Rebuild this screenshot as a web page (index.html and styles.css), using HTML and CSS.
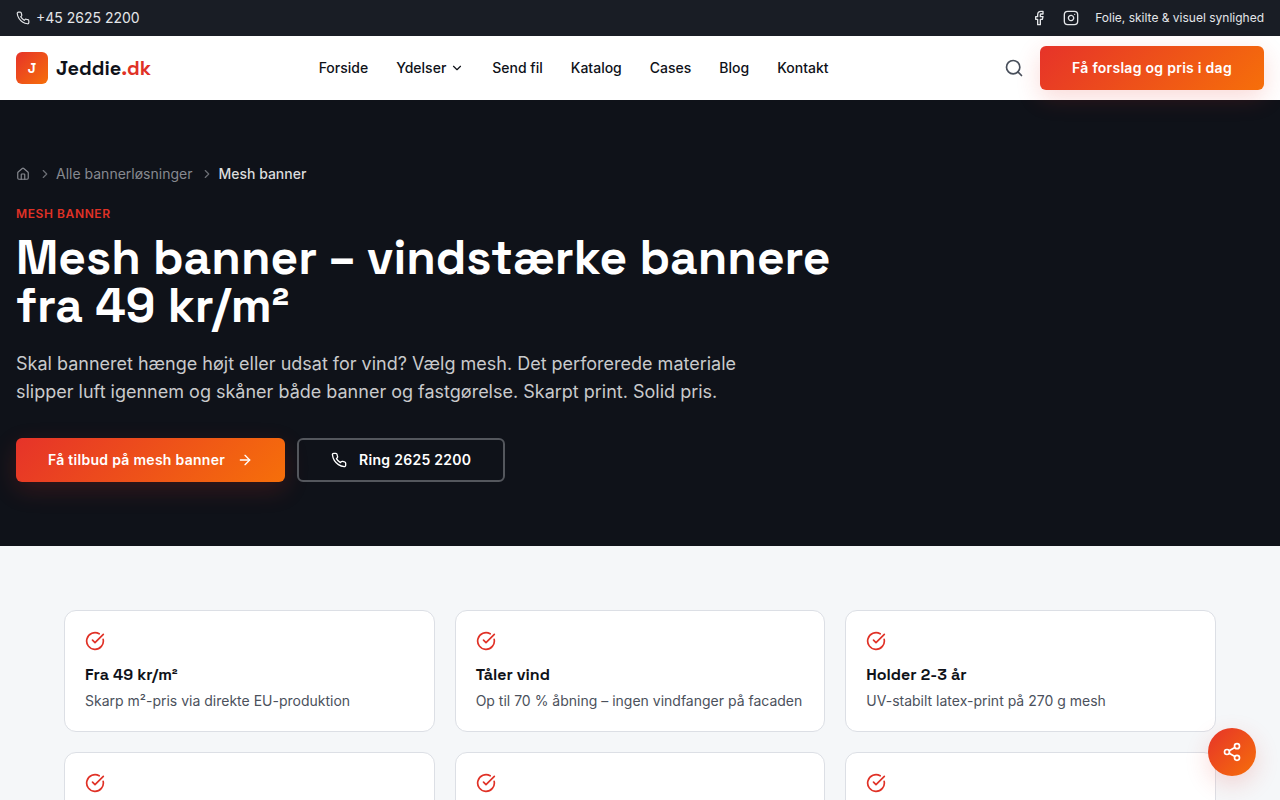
FILE: index.html
```html
<!DOCTYPE html>
<html lang="da">
<head>
  <title>Mesh banner – Jeddie.dk</title>
  <meta charset="UTF-8">
  <meta name="viewport" content="width=device-width, initial-scale=1">
  <link rel="stylesheet" href="styles.css">
</head>
<body>
  <svg class="sprite" aria-hidden="true">
    <symbol id="phone" viewBox="0 0 24 24">
      <path d="M22 16.92v3a2 2 0 0 1-2.18 2 19.79 19.79 0 0 1-8.63-3.07 19.5 19.5 0 0 1-6-6 19.79 19.79 0 0 1-3.07-8.67A2 2 0 0 1 4.11 2h3a2 2 0 0 1 2 1.72 12.84 12.84 0 0 0 .7 2.81 2 2 0 0 1-.45 2.11L8.09 9.91a16 16 0 0 0 6 6l1.27-1.27a2 2 0 0 1 2.11-.45 12.84 12.84 0 0 0 2.81.7A2 2 0 0 1 22 16.92z"/>
    </symbol>
    <symbol id="chevron-right" viewBox="0 0 24 24">
      <path d="m9 18 6-6-6-6"/>
    </symbol>
    <symbol id="check" viewBox="0 0 24 24">
      <path d="M21.801 10A10 10 0 1 1 17 3.335"/>
      <path d="m9 11 3 3L22 4"/>
    </symbol>
  </svg>

  <div class="topbar">
    <a class="topbar-phone" href="tel:+4526252200">
      <svg class="icon icon-14"><use href="#phone"/></svg>
      +45 2625 2200
    </a>
    <div class="topbar-right">
      <a href="#" aria-label="Facebook">
        <svg class="icon icon-16" viewBox="0 0 24 24"><path d="M18 2h-3a5 5 0 0 0-5 5v3H7v4h3v8h4v-8h3l1-4h-4V7a1 1 0 0 1 1-1h3z"/></svg>
      </a>
      <a href="#" aria-label="Instagram">
        <svg class="icon icon-16" viewBox="0 0 24 24"><rect width="20" height="20" x="2" y="2" rx="5"/><path d="M16 11.37A4 4 0 1 1 12.63 8 4 4 0 0 1 16 11.37z"/><path d="M17.5 6.5h.01"/></svg>
      </a>
      <span>Folie, skilte &amp; visuel synlighed</span>
    </div>
  </div>

  <header class="header">
    <a class="logo" href="#">
      <span class="logo-mark">J</span>
      <span>Jeddie<span class="logo-tld">.dk</span></span>
    </a>
    <nav class="nav">
      <a href="#">Forside</a>
      <button type="button">Ydelser
        <svg class="icon icon-14" viewBox="0 0 24 24"><path d="m6 9 6 6 6-6"/></svg>
      </button>
      <a href="#">Send fil</a>
      <a href="#">Katalog</a>
      <a href="#">Cases</a>
      <a href="#">Blog</a>
      <a href="#">Kontakt</a>
    </nav>
    <div class="header-actions">
      <button class="search" type="button" aria-label="Søg">
        <svg class="icon icon-20" viewBox="0 0 24 24"><circle cx="11" cy="11" r="8"/><path d="m21 21-4.3-4.3"/></svg>
      </button>
      <a class="btn btn-primary" href="#">Få forslag og pris i dag</a>
    </div>
  </header>

  <section class="hero">
    <nav class="breadcrumb" aria-label="Brødkrumme">
      <a href="#" aria-label="Hjem">
        <svg class="icon icon-14" viewBox="0 0 24 24"><path d="M15 21v-8a1 1 0 0 0-1-1h-4a1 1 0 0 0-1 1v8"/><path d="M3 10a2 2 0 0 1 .709-1.528l7-5.999a2 2 0 0 1 2.582 0l7 5.999A2 2 0 0 1 21 10v9a2 2 0 0 1-2 2H5a2 2 0 0 1-2-2z"/></svg>
      </a>
      <span class="crumb">
        <svg class="icon icon-14"><use href="#chevron-right"/></svg>
        <a href="#">Alle bannerløsninger</a>
      </span>
      <span class="crumb">
        <svg class="icon icon-14"><use href="#chevron-right"/></svg>
        <span class="current">Mesh banner</span>
      </span>
    </nav>
    <p class="eyebrow">Mesh banner</p>
    <h1>Mesh banner – vindstærke bannere fra 49 kr/m²</h1>
    <p class="lead">Skal banneret hænge højt eller udsat for vind? Vælg mesh. Det perforerede materiale slipper luft igennem og skåner både banner og fastgørelse. Skarpt print. Solid pris.</p>
    <div class="hero-actions">
      <a class="btn btn-primary" href="#">Få tilbud på mesh banner
        <svg class="icon icon-16" viewBox="0 0 24 24"><path d="M5 12h14"/><path d="m12 5 7 7-7 7"/></svg>
      </a>
      <a class="btn btn-outline" href="tel:+4526252200">
        <svg class="icon icon-16"><use href="#phone"/></svg>
        Ring 2625 2200
      </a>
    </div>
  </section>

  <section class="features">
    <div class="grid">
      <div class="card">
        <svg class="icon icon-20"><use href="#check"/></svg>
        <h3>Fra 49 kr/m²</h3>
        <p>Skarp m²-pris via direkte EU-produktion</p>
      </div>
      <div class="card">
        <svg class="icon icon-20"><use href="#check"/></svg>
        <h3>Tåler vind</h3>
        <p>Op til 70 % åbning – ingen vindfanger på facaden</p>
      </div>
      <div class="card">
        <svg class="icon icon-20"><use href="#check"/></svg>
        <h3>Holder 2-3 år</h3>
        <p>UV-stabilt latex-print på 270 g mesh</p>
      </div>
      <div class="card card-short">
        <svg class="icon icon-20"><use href="#check"/></svg>
      </div>
      <div class="card card-short">
        <svg class="icon icon-20"><use href="#check"/></svg>
      </div>
      <div class="card card-short">
        <svg class="icon icon-20"><use href="#check"/></svg>
      </div>
    </div>
  </section>

  <button class="share" type="button" aria-label="Del">
    <svg class="icon icon-20" viewBox="0 0 24 24"><circle cx="18" cy="5" r="3"/><circle cx="6" cy="12" r="3"/><circle cx="18" cy="19" r="3"/><path d="m8.59 13.51 6.83 3.98"/><path d="m15.41 6.51-6.82 3.98"/></svg>
  </button>
</body>
</html>
```

FILE: styles.css
```css
:root {
  --red: #e03126;
  --gradient: linear-gradient(135deg, #e63329, #f66f0a);
  --dark: #0f1219;
  --heading: "Space Grotesk", Inter, sans-serif;
}
* {
  box-sizing: border-box;
  margin: 0;
  padding: 0;
}
body {
  font-family: Inter, sans-serif;
  font-size: 14px;
  line-height: 20px;
  color: var(--dark);
  background: #f5f7f9;
}
a {
  color: inherit;
  text-decoration: none;
}
button {
  font: inherit;
  color: inherit;
  background: none;
  border: none;
  cursor: pointer;
}
.sprite {
  display: none;
}
.icon {
  display: block;
  flex-shrink: 0;
  fill: none;
  stroke: currentColor;
  stroke-width: 2;
  stroke-linecap: round;
  stroke-linejoin: round;
}
.icon-14 {
  width: 14px;
  height: 14px;
}
.icon-16 {
  width: 16px;
  height: 16px;
}
.icon-20 {
  width: 20px;
  height: 20px;
}

/* top bar */
.topbar {
  display: flex;
  align-items: center;
  justify-content: space-between;
  padding: 8px 16px;
  color: #e4e6e9;
  background: #191d25;
}
.topbar-phone {
  display: flex;
  align-items: center;
  gap: 6px;
}
.topbar-right {
  display: flex;
  align-items: center;
  gap: 16px;
  font-size: 12px;
}

/* header */
.header {
  position: relative;
  display: flex;
  align-items: center;
  justify-content: space-between;
  min-height: 64px;
  padding: 0 16px;
  background: #fff;
}
.logo {
  display: flex;
  align-items: center;
  gap: 8px;
  font-family: var(--heading);
  font-size: 20px;
  font-weight: 700;
}
.logo-mark {
  display: flex;
  align-items: center;
  justify-content: center;
  width: 32px;
  height: 32px;
  font-size: 14px;
  color: #fff;
  background: var(--gradient);
  border-radius: 6px;
}
.logo-tld {
  color: var(--red);
}
.nav {
  display: flex;
  align-items: center;
  gap: 28px;
  font-weight: 500;
}
.nav button {
  display: flex;
  align-items: center;
  gap: 4px;
}
.header-actions {
  display: flex;
  align-items: center;
  gap: 8px;
}
.search {
  padding: 8px;
  color: #484f5b;
}
.btn {
  display: inline-flex;
  align-items: center;
  justify-content: center;
  gap: 12px;
  min-height: 44px;
  padding: 0 32px;
  font-weight: 600;
  letter-spacing: 0.02em;
  color: #fff;
  border-radius: 6px;
}
.btn-primary {
  background: var(--gradient);
  box-shadow: 0 8px 24px rgba(230, 51, 41, 0.18);
}
.btn-outline {
  border: 2px solid #54575d;
}

/* hero */
.hero {
  padding: 64px 16px;
  color: #fff;
  background: var(--dark);
}
.breadcrumb {
  display: flex;
  align-items: center;
  gap: 8px;
  margin-bottom: 22px;
  color: #878990;
}
.crumb {
  display: flex;
  align-items: center;
  gap: 4px;
}
.crumb .icon {
  color: #6c6e74;
}
.current {
  font-weight: 500;
  color: #dbdcdd;
}
.eyebrow {
  margin-bottom: 12px;
  font-size: 12px;
  font-weight: 600;
  line-height: 16px;
  letter-spacing: 0.05em;
  text-transform: uppercase;
  color: var(--red);
}
.hero h1 {
  max-width: 864px;
  margin-bottom: 20px;
  font-family: var(--heading);
  font-size: 48px;
  font-weight: 700;
  line-height: 48px;
}
.lead {
  max-width: 768px;
  margin-bottom: 32px;
  font-size: 18px;
  line-height: 28px;
  color: #c9cacc;
}
.hero-actions {
  display: flex;
  flex-wrap: wrap;
  gap: 12px;
}

/* features */
.features {
  padding: 64px 16px;
}
.grid {
  display: grid;
  grid-template-columns: repeat(3, 1fr);
  gap: 20px;
  max-width: 1152px;
  margin: 0 auto;
}
.card {
  padding: 20px;
  background: #fff;
  border: 1px solid #dcdfe5;
  border-radius: 12px;
}
.card .icon {
  color: var(--red);
}
.card h3 {
  margin: 12px 0 4px;
  font-family: var(--heading);
  font-size: 16px;
  line-height: 24px;
}
.card p {
  color: #4b515c;
}
.card-short {
  min-height: 122px;
}

.share {
  position: fixed;
  right: 24px;
  bottom: 24px;
  display: flex;
  align-items: center;
  justify-content: center;
  width: 48px;
  height: 48px;
  color: #fff;
  background: var(--gradient);
  border-radius: 50%;
  box-shadow: 0 8px 24px rgba(230, 51, 41, 0.18);
}
```
